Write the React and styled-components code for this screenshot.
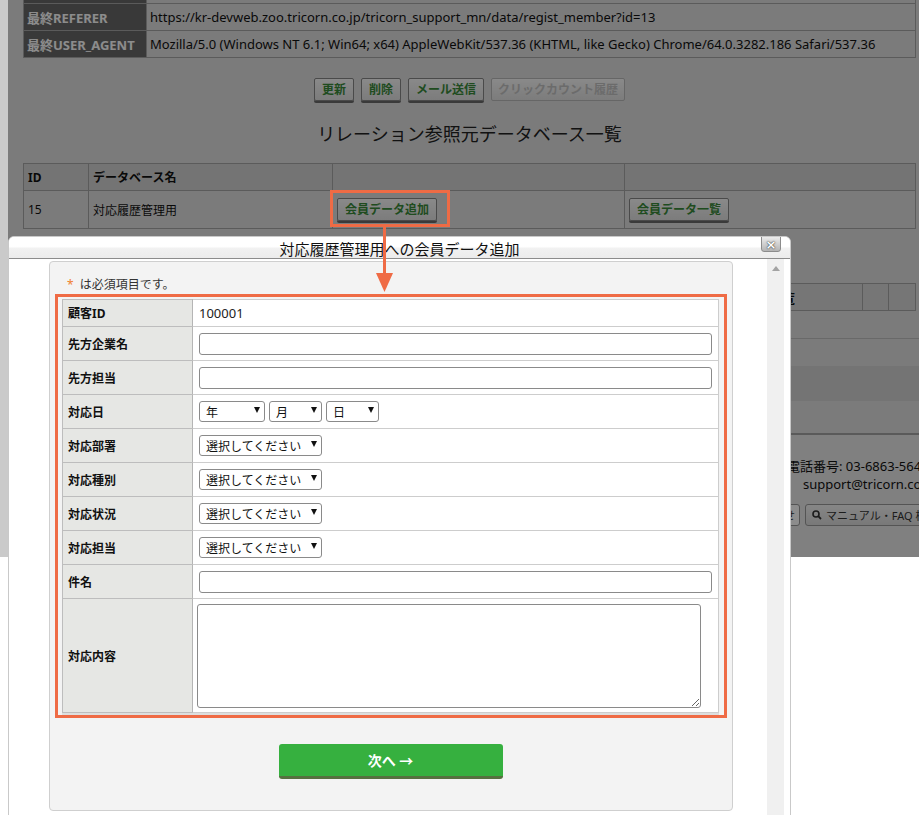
import React from 'react';
import styled, { createGlobalStyle } from 'styled-components';

const GlobalStyle = createGlobalStyle`
  html, body {
    margin: 0;
    padding: 0;
    background: #fff;
    overflow: hidden;
  }
  body {
    font-family: "Noto Sans", "Noto Sans CJK JP", sans-serif;
    color: #222;
  }
`;

const Root = styled.div`
  position: relative;
  width: 919px;
  height: 815px;
  overflow: hidden;
`;

/* ---------- page behind the dialog ---------- */

const Page = styled.div`
  position: relative;
  height: 557px;
  overflow: hidden;
  border-left: 8px solid #cacaca;
  background: #e0e0e0;
`;

const Shade = styled.div`
  position: absolute;
  inset: 0;
  background: rgba(0, 0, 0, 0.45);
`;

const Main = styled.div`
  padding: 0 3px 0 15px;
`;

const InfoTable = styled.table`
  width: 100%;
  margin-top: -24px;
  border-collapse: collapse;
  font-size: 13px;
  th, td {
    height: 26px;
    border: 1px solid #a7a7a7;
    padding: 0 3px;
    text-align: left;
    white-space: nowrap;
  }
  th {
    width: 116px;
    background: #696969;
    color: #fff;
    font-weight: 700;
  }
  td {
    color: #111;
  }
`;

const ButtonRow = styled.div`
  display: flex;
  justify-content: center;
  gap: 7px;
  margin-top: 20px;
`;

const PageButton = styled.button`
  height: 23px;
  padding: 0 ${p => (p.disabled ? 6 : 7)}px;
  border: 1px solid ${p => (p.disabled ? '#bbb' : '#878787')};
  border-radius: 2px;
  background: linear-gradient(#fafafa, #e2e2e2);
  box-shadow: ${p => (p.disabled ? 'none' : '0 2px 0 #6a6a6a')};
  color: ${p => (p.disabled ? '#c4c4c4' : '#3a8a3a')};
  font: 700 12px "Noto Sans", "Noto Sans CJK JP", sans-serif;
  line-height: 21px;
`;

const Heading = styled.h2`
  margin: 19px 0 15px;
  text-align: center;
  font-size: 18px;
  font-weight: 400;
  line-height: 28px;
  color: #222;
`;

const RelTable = styled.table`
  width: 100%;
  border-collapse: collapse;
  font-size: 12px;
  th, td {
    border: 1px solid #a7a7a7;
    padding: 0 4px;
    text-align: left;
    color: #111;
  }
  th {
    height: 26px;
    background: #d3d3d3;
    font-weight: 700;
  }
  td {
    height: 37px;
  }
`;

const ListTable = styled.table`
  width: 100%;
  margin-top: 54px;
  border-collapse: collapse;
  th {
    height: 26px;
    border: 1px solid #a7a7a7;
    background: #d8d8d8;
    padding: 0 4px;
    text-align: left;
    font-size: 13px;
    font-weight: 700;
    color: #111;
  }
`;

const Divider = styled.div`
  height: 27px;
  border-bottom: 1px solid #c0c0c0;
`;

const Band = styled.div`
  height: 35px;
  margin-top: 27px;
  background: #d3d3d3;
`;

const FooterTop = styled.div`
  height: 32px;
  border-bottom: 2px solid #a4a4a4;
`;

const Footer = styled.div`
  height: 123px;
  background: #e9e9e9;
  padding-top: 22px;
  box-sizing: border-box;
  white-space: nowrap;
`;

const ContactLine = styled.div`
  padding-left: ${p => p.$indent}px;
  font-size: 13px;
  line-height: 18px;
  color: #111;
`;

const FooterButtons = styled.div`
  display: flex;
  gap: 5px;
  margin-top: 11px;
  padding-left: 716px;
`;

const FooterButton = styled.button`
  display: flex;
  align-items: center;
  gap: 4px;
  height: 22px;
  padding: 0 ${p => (p.$plain ? 4 : 6)}px;
  border: 1px solid #999;
  border-radius: 3px;
  background: ${p => (p.$plain ? '#fff' : 'linear-gradient(#f4f4f4, #dcdcdc)')};
  font: 11px "Noto Sans", "Noto Sans CJK JP", sans-serif;
  color: #333;
  white-space: nowrap;
`;

/* ---------- dialog ---------- */

const Modal = styled.div`
  position: absolute;
  left: 8px;
  top: 236px;
  width: 783px;
  height: 600px;
  box-sizing: border-box;
  display: flex;
  flex-direction: column;
  background: #fff;
  border: 1px solid #c9c9c9;
  border-radius: 6px 6px 0 0;
  overflow: hidden;
`;

const TitleBar = styled.div`
  position: relative;
  height: 21px;
  flex: none;
  background: linear-gradient(#ffffff 0, #ffffff 45%, #f1f1f1 55%, #ececec 100%);
  border-bottom: 1px solid #8c8c8c;
  text-align: center;
  font-size: 15px;
  line-height: 24px;
  color: #111;
  overflow: hidden;
`;

const CloseButton = styled.button`
  position: absolute;
  top: -1px;
  right: 9px;
  width: 20px;
  height: 16px;
  padding: 0;
  border: 1px solid #8c8c8c;
  border-radius: 0 0 3px 3px;
  background: linear-gradient(#ececec, #b4b4b4);
  color: #fff;
  font: 700 13px "DejaVu Sans", sans-serif;
  line-height: 13px;
  text-shadow: 0 0 2px #444, 0 0 1px #333;
`;

const ModalBody = styled.div`
  flex: 1;
  display: flex;
  padding-top: 2px;
  min-height: 0;
`;

const ScrollArea = styled.div`
  flex: 1;
  padding-left: 40px;
`;

const ScrollTrack = styled.div`
  width: 17px;
  margin: -2px 6px 0 0;
  background: #f0f0f0;
  &::before {
    content: "";
    display: block;
    width: 0;
    margin: 7px auto 0;
    border-left: 4px solid transparent;
    border-right: 4px solid transparent;
    border-bottom: 5px solid #a3a3a3;
  }
`;

const Panel = styled.div`
  width: 684px;
  box-sizing: border-box;
  padding: 15px 13px 31px 12px;
  background: #f3f3f3;
  border: 1px solid #cfcfcf;
  border-radius: 4px;
`;

const Note = styled.div`
  padding-left: 5px;
  margin-bottom: 6px;
  font-size: 12px;
  line-height: 16px;
  color: #333;
  span {
    color: #f0802f;
    margin-right: 6px;
  }
`;

const FormTable = styled.table`
  width: 657px;
  border-collapse: collapse;
  background: #fff;
  border: 1px solid #b9b9b9;
  box-shadow: 0 2px 0 #dedede;
`;

const Label = styled.th`
  width: 124px;
  height: ${p => p.$h}px;
  padding: 0 0 0 5px;
  background: #e6e7e4;
  border: 1px solid #bdbdbd;
  border-right-color: #b5b5b5;
  text-align: left;
  vertical-align: middle;
  font-size: 12px;
  font-weight: 700;
  color: #111;
`;

const Value = styled.td`
  padding: 0 6px;
  border: 1px solid #cdcdcd;
  border-left-color: #b5b5b5;
  vertical-align: middle;
  font-size: 13px;
  color: #222;
`;

const TextInput = styled.input`
  display: block;
  width: 100%;
  height: 22px;
  box-sizing: border-box;
  border: 1px solid #8a8a8a;
  border-radius: 3px;
  background: #fff;
`;

const Area = styled.textarea`
  display: block;
  width: 504px;
  height: 104px;
  margin-left: -2px;
  box-sizing: border-box;
  border: 1px solid #8a8a8a;
  border-radius: 3px;
  background: #fff;
`;

const DateRow = styled.div`
  display: flex;
  gap: 4px;
`;

const SelectWrap = styled.span`
  position: relative;
  display: inline-block;
  width: ${p => p.$w}px;
  height: 21px;
  &::after {
    content: "";
    position: absolute;
    right: 5px;
    top: 6px;
    border-left: 3.5px solid transparent;
    border-right: 3.5px solid transparent;
    border-top: 6px solid #111;
    pointer-events: none;
  }
`;

const Select = styled.select`
  appearance: none;
  width: 100%;
  height: 100%;
  box-sizing: border-box;
  padding: 1px 14px 0 6px;
  border: 1px solid #8a8a8a;
  border-radius: 3px;
  background: #fff;
  font: 12px "Noto Sans", "Noto Sans CJK JP", sans-serif;
  color: #111;
`;

const Actions = styled.div`
  display: flex;
  justify-content: center;
  margin-top: 31px;
`;

const NextButton = styled.button`
  width: 224px;
  height: 35px;
  border: none;
  border-bottom: 3px solid #56713f;
  border-radius: 3px;
  background: #36b03f;
  color: #fff;
  font: 700 14px "Noto Sans", "Noto Sans CJK JP", sans-serif;
`;

/* ---------- annotations ---------- */

const Highlight = styled.div`
  position: absolute;
  border: 3px solid #ef6b45;
  box-sizing: border-box;
  pointer-events: none;
`;

const ArrowSvg = styled.svg`
  position: absolute;
  left: 374px;
  top: 227px;
  pointer-events: none;
`;

function Dropdown({ width, children }) {
  return (
    <SelectWrap $w={width}>
      <Select defaultValue="">
        <option value="">{children}</option>
      </Select>
    </SelectWrap>
  );
}

function FormRow({ label, height = 33, children }) {
  return (
    <tr>
      <Label $h={height}>{label}</Label>
      <Value>{children}</Value>
    </tr>
  );
}

const selectRows = ['対応部署', '対応種別', '対応状況', '対応担当'];

export default function App() {
  return (
    <Root>
      <GlobalStyle />
      <Page>
        <Main>
          <InfoTable>
            <tbody>
              <tr>
                <th></th>
                <td></td>
              </tr>
              <tr>
                <th>最終REFERER</th>
                <td>https://kr-devweb.zoo.tricorn.co.jp/tricorn_support_mn/data/regist_member?id=13</td>
              </tr>
              <tr>
                <th>最終USER_AGENT</th>
                <td>Mozilla/5.0 (Windows NT 6.1; Win64; x64) AppleWebKit/537.36 (KHTML, like Gecko) Chrome/64.0.3282.186 Safari/537.36</td>
              </tr>
            </tbody>
          </InfoTable>
          <ButtonRow>
            <PageButton>更新</PageButton>
            <PageButton>削除</PageButton>
            <PageButton>メール送信</PageButton>
            <PageButton disabled>クリックカウント履歴</PageButton>
          </ButtonRow>
          <Heading>リレーション参照元データベース一覧</Heading>
          <RelTable>
            <thead>
              <tr>
                <th style={{ width: 56 }}>ID</th>
                <th style={{ width: 235 }}>データベース名</th>
                <th style={{ width: 283 }}></th>
                <th></th>
              </tr>
            </thead>
            <tbody>
              <tr>
                <td>15</td>
                <td>対応履歴管理用</td>
                <td><PageButton>会員データ追加</PageButton></td>
                <td><PageButton>会員データ一覧</PageButton></td>
              </tr>
            </tbody>
          </RelTable>
          <ListTable>
            <thead>
              <tr>
                <th>ID</th>
                <th style={{ width: 154 }}>会員データ一覧</th>
                <th style={{ width: 17 }}></th>
                <th style={{ width: 18 }}></th>
              </tr>
            </thead>
          </ListTable>
        </Main>
        <Divider />
        <Band />
        <FooterTop />
        <Footer>
          <ContactLine $indent={779}>電話番号: 03-6863-5640</ContactLine>
          <ContactLine $indent={795}>support@tricorn.co.jp</ContactLine>
          <FooterButtons>
            <FooterButton $plain>お問い合わせ</FooterButton>
            <FooterButton>
              <svg width="10" height="10" viewBox="0 0 10 10">
                <circle cx="4" cy="4" r="3" fill="none" stroke="#333" strokeWidth="1.6" />
                <path d="M6.2 6.2 L9 9" stroke="#333" strokeWidth="1.8" />
              </svg>
              マニュアル・FAQ 検索
            </FooterButton>
          </FooterButtons>
        </Footer>
        <Shade />
      </Page>

      <Modal>
        <TitleBar>
          対応履歴管理用への会員データ追加
          <CloseButton>×</CloseButton>
        </TitleBar>
        <ModalBody>
          <ScrollArea>
            <Panel>
              <Note><span>*</span>は必須項目です。</Note>
              <FormTable>
                <tbody>
                  <FormRow label="顧客ID" height={26}>100001</FormRow>
                  <FormRow label="先方企業名"><TextInput /></FormRow>
                  <FormRow label="先方担当"><TextInput /></FormRow>
                  <FormRow label="対応日">
                    <DateRow>
                      <Dropdown width={66}>年</Dropdown>
                      <Dropdown width={53}>月</Dropdown>
                      <Dropdown width={53}>日</Dropdown>
                    </DateRow>
                  </FormRow>
                  {selectRows.map(label => (
                    <FormRow key={label} label={label}>
                      <Dropdown width={123}>選択してください</Dropdown>
                    </FormRow>
                  ))}
                  <FormRow label="件名"><TextInput /></FormRow>
                  <FormRow label="対応内容" height={113}><Area /></FormRow>
                </tbody>
              </FormTable>
              <Actions>
                <NextButton>次へ →</NextButton>
              </Actions>
            </Panel>
          </ScrollArea>
          <ScrollTrack />
        </ModalBody>
      </Modal>

      <Highlight style={{ left: 330, top: 190, width: 120, height: 37 }} />
      <Highlight style={{ left: 55, top: 294, width: 672, height: 424 }} />
      <ArrowSvg width="20" height="66" viewBox="0 0 20 66">
        <path d="M10.5 0 V50" stroke="#ef6b45" strokeWidth="3" />
        <path d="M2 46 L19 46 L10.5 65 Z" fill="#ef6b45" />
      </ArrowSvg>
    </Root>
  );
}
